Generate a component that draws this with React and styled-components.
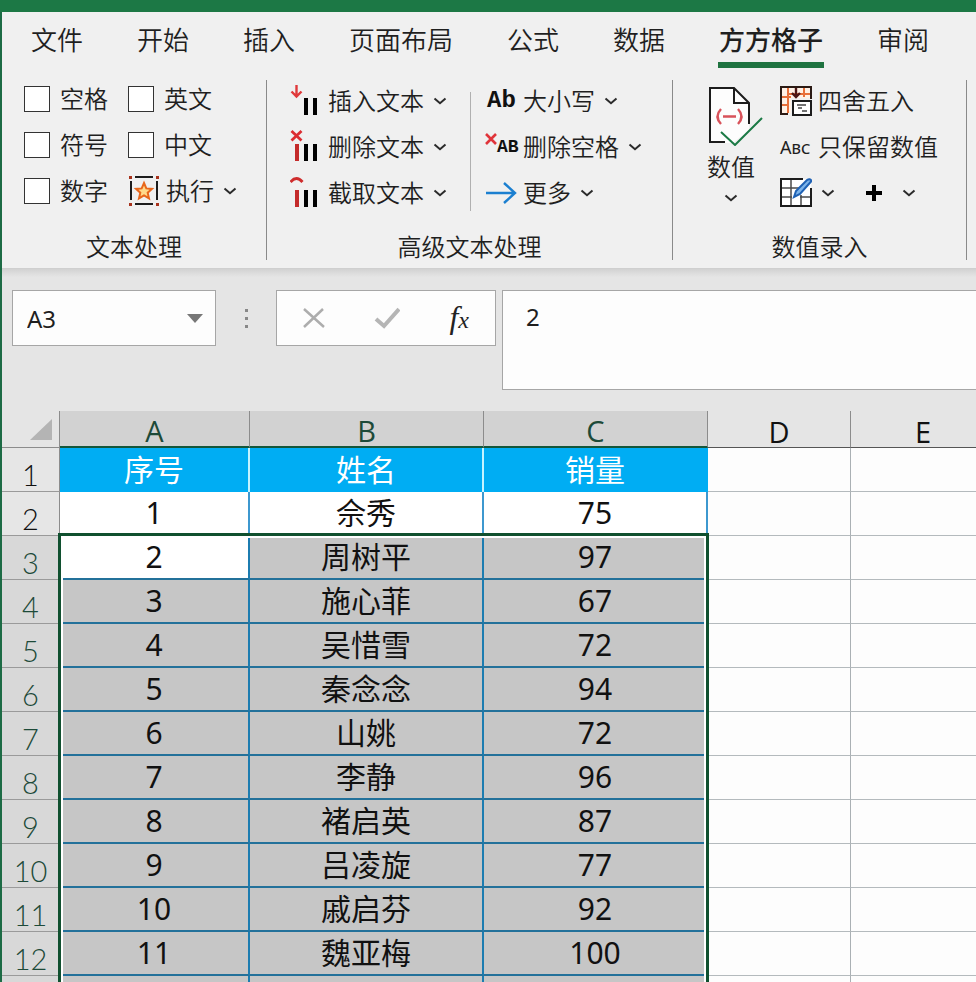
import React from 'react';
import styled, { createGlobalStyle } from 'styled-components';

const GlobalStyle = createGlobalStyle`
  * {
    box-sizing: border-box;
  }

  body {
    margin: 0;
    background: #e5e5e5;
    color: #1f1f1f;
    font-family: 'Noto Sans', 'Noto Sans CJK SC', sans-serif;
  }

  button,
  input,
  textarea {
    font: inherit;
    color: inherit;
  }
`;

const tabs = ['文件', '开始', '插入', '页面布局', '公式', '数据', '方方格子', '审阅'];

const columns = [
  { name: 'A', selected: true },
  { name: 'B', selected: true },
  { name: 'C', selected: true },
  { name: 'D' },
  { name: 'E' }
];

const people = [
  [1, '佘秀', 75],
  [2, '周树平', 97],
  [3, '施心菲', 67],
  [4, '吴惜雪', 72],
  [5, '秦念念', 94],
  [6, '山姚', 72],
  [7, '李静', 96],
  [8, '褚启英', 87],
  [9, '吕凌旋', 77],
  [10, '戚启芬', 92],
  [11, '魏亚梅', 100]
];

const Caret = () => (
  <CaretSvg width="14" height="8" viewBox="0 0 14 8" aria-hidden="true">
    <path d="M1.5 1.5 L7 6.2 L12.5 1.5" fill="none" stroke="#2b2b2b" strokeWidth="2" />
  </CaretSvg>
);

const StarIcon = () => (
  <svg width="32" height="32" viewBox="0 0 32 32" aria-hidden="true">
    <path d="M7 2 H25 M7 29 H25 M3 6 V25 M29 6 V25" stroke="#1c1c1c" strokeWidth="2" />
    <path d="M1 1h3v3H1z M28 1h3v3h-3z M1 28h3v3H1z M28 28h3v3h-3z" fill="#a8321c" />
    <path
      d="M16 8 L18.3 13.4 L24 13.9 L19.7 17.7 L21 23.4 L16 20.4 L11 23.4 L12.3 17.7 L8 13.9 L13.7 13.4 Z"
      fill="#ffd98a"
      stroke="#e8661b"
      strokeWidth="2"
    />
  </svg>
);

const BarsIcon = ({ kind }) => (
  <svg width="32" height="36" viewBox="0 0 32 36" aria-hidden="true">
    {kind === 'insert' && (
      <path d="M6.5 2 V13 M1.5 8.5 L6.5 13.5 L11.5 8.5" fill="none" stroke="#e0393b" strokeWidth="2.4" />
    )}
    {kind === 'delete' && (
      <path d="M1.5 2 L11.5 11.5 M11.5 2 L1.5 11.5" stroke="#dc2c31" strokeWidth="2.8" />
    )}
    {kind === 'cut' && (
      <path d="M0.5 7 Q6.5 0 12.5 7" fill="none" stroke="#cf2d2d" strokeWidth="2.8" />
    )}
    {kind !== 'insert' && <path d="M5 15h4v17H5z" fill="#c42b2b" />}
    <path d="M14 15h4v17h-4z M23 15h4v17h-4z" fill="#000" />
  </svg>
);

const ArrowIcon = () => (
  <svg width="32" height="24" viewBox="0 0 32 24" aria-hidden="true">
    <path d="M1 12 H30 M19 2 L30 12 L19 22" fill="none" stroke="#1b7fd0" strokeWidth="2.4" />
  </svg>
);

const RedCross = () => (
  <svg width="12" height="12" viewBox="0 0 12 12" aria-hidden="true">
    <path d="M1 1 L11 11 M11 1 L1 11" stroke="#e0343a" strokeWidth="2.6" />
  </svg>
);

const DocumentIcon = () => (
  <svg width="56" height="60" viewBox="0 0 56 60" aria-hidden="true">
    <path d="M3 2 H27 L42 17 V44 L26 57 H3 Z" fill="#fdfdfd" />
    <path d="M18 56 H3 V2 H27 L42 17 V38 M27 2 V17 H42" fill="none" stroke="#1c1c1c" strokeWidth="2" />
    <path
      d="M14 23 Q7 30.5 14 38 M31 23 Q38 30.5 31 38 M16 30.5 H29"
      fill="none"
      stroke="#d8525a"
      strokeWidth="2.4"
    />
    <path d="M14 46 L28 59 L55 32" fill="none" stroke="#1b7a45" strokeWidth="2" />
  </svg>
);

const RoundIcon = () => (
  <svg width="32" height="32" viewBox="0 0 32 32" aria-hidden="true">
    <path d="M1 2h30v11H11v15H1z" fill="#fff1e6" />
    <path d="M8 3 V28 M24 3 V12 M2 12 H11 M2 20 H8 M9 9 H23 M24 9 H30" stroke="#e8703a" strokeWidth="2" />
    <path d="M8 29 H1 V2 H31 V14" fill="none" stroke="#2b1a14" strokeWidth="2" />
    <path d="M16 3 V12 M12 8 L16 12 L20 8" fill="none" stroke="#4d1616" strokeWidth="2.4" />
    <path d="M13 16h18v14H13z" fill="#fff" stroke="#1c1c1c" strokeWidth="2" />
    <path d="M17 20 H26 M18 23 H22 M22 26 H27" stroke="#444" strokeWidth="1.5" />
  </svg>
);

const TableEditIcon = () => (
  <svg width="32" height="32" viewBox="0 0 32 32" aria-hidden="true">
    <path d="M1 2h30v27H1z" fill="#fff" />
    <path d="M11 2 V29 M21 18 V29 M1 11 H21 M1 20 H12 M20 20 H31" stroke="#4a4a4a" strokeWidth="1.5" />
    <path d="M23 2 H1 V29 H31 V11" fill="none" stroke="#1c1c1c" strokeWidth="2" />
    <path d="M14 20 L16 14 L27 3 Q30 1 31.5 4 L20 17 Z" fill="#7db4ea" stroke="#1f62b5" strokeWidth="2" />
  </svg>
);

const CommandButton = ({ icon, children }) => (
  <Command type="button">
    <IconSlot>{icon}</IconSlot>
    <span>{children}</span>
    <Caret />
  </Command>
);

const CheckOption = ({ children }) => (
  <CheckLabel>
    <CheckInput type="checkbox" />
    {children}
  </CheckLabel>
);

const Ribbon = () => (
  <RibbonPanel>
    <TabList>
      {tabs.map((tab) => (
        <Tab key={tab} type="button" $active={tab === '方方格子'}>
          {tab}
        </Tab>
      ))}
    </TabList>
    <Groups>
      <Group>
        <CheckGrid>
          <CheckOption>空格</CheckOption>
          <CheckOption>英文</CheckOption>
          <CheckOption>符号</CheckOption>
          <CheckOption>中文</CheckOption>
          <CheckOption>数字</CheckOption>
          <CommandButton icon={<StarIcon />}>执行</CommandButton>
        </CheckGrid>
        <GroupTitle>文本处理</GroupTitle>
      </Group>
      <Divider />
      <Group $offset>
        <GroupBody>
          <Stack>
            <CommandButton icon={<BarsIcon kind="insert" />}>插入文本</CommandButton>
            <CommandButton icon={<BarsIcon kind="delete" />}>删除文本</CommandButton>
            <CommandButton icon={<BarsIcon kind="cut" />}>截取文本</CommandButton>
          </Stack>
          <InnerDivider />
          <Stack>
            <CommandButton icon={<CaseGlyph>Ab</CaseGlyph>}>大小写</CommandButton>
            <CommandButton
              icon={
                <CrossedGlyph>
                  <RedCross />
                  <b>AB</b>
                </CrossedGlyph>
              }
            >
              删除空格
            </CommandButton>
            <CommandButton icon={<ArrowIcon />}>更多</CommandButton>
          </Stack>
        </GroupBody>
        <GroupTitle>高级文本处理</GroupTitle>
      </Group>
      <Divider />
      <Group $offset>
        <GroupBody $wide>
          <BigCommand type="button">
            <DocumentIcon />
            <span>数值</span>
            <BigCaret>
              <Caret />
            </BigCaret>
          </BigCommand>
          <Stack>
            <Command type="button">
              <IconSlot>
                <RoundIcon />
              </IconSlot>
              <span>四舍五入</span>
            </Command>
            <Command type="button">
              <IconSlot>
                <SmallCaps>Abc</SmallCaps>
              </IconSlot>
              <span>只保留数值</span>
            </Command>
            <IconRow>
              <Command type="button" aria-label="表格编辑">
                <TableEditIcon />
                <Caret />
              </Command>
              <Command type="button" aria-label="加" $spread>
                <svg width="18" height="18" viewBox="0 0 18 18" aria-hidden="true">
                  <path d="M9 1 V17 M1 9 H17" stroke="#000" strokeWidth="4" />
                </svg>
                <Caret />
              </Command>
            </IconRow>
          </Stack>
        </GroupBody>
        <GroupTitle>数值录入</GroupTitle>
      </Group>
      <Divider />
    </Groups>
  </RibbonPanel>
);

const FormulaBar = () => (
  <FormulaRow>
    <NameBox>
      <NameInput aria-label="名称框" defaultValue="A3" />
      <PlainButton type="button" aria-label="名称列表">
        <svg width="16" height="9" viewBox="0 0 16 9" aria-hidden="true">
          <path d="M0 0 H16 L8 9 Z" fill="#777" />
        </svg>
      </PlainButton>
    </NameBox>
    <Dots width="4" height="20" viewBox="0 0 4 20" aria-hidden="true">
      <path d="M1 1h3v3H1z M1 9h3v3H1z M1 17h3v3H1z" fill="#888" />
    </Dots>
    <FunctionBox>
      <PlainButton type="button" aria-label="取消">
        <svg width="22" height="20" viewBox="0 0 22 20" aria-hidden="true">
          <path d="M1 1 L21 19 M20 1 L1 19" stroke="#adadad" strokeWidth="2.5" />
        </svg>
      </PlainButton>
      <PlainButton type="button" aria-label="输入">
        <svg width="26" height="22" viewBox="0 0 26 22" aria-hidden="true">
          <path d="M2 12 L10 19 L25 2" fill="none" stroke="#b5b5b5" strokeWidth="4" />
        </svg>
      </PlainButton>
      <FxButton type="button">
        f<small>x</small>
      </FxButton>
    </FunctionBox>
    <FormulaInput aria-label="编辑栏" defaultValue="2" />
  </FormulaRow>
);

const Sheet = () => (
  <SheetArea>
    <Table>
      <colgroup>
        <Col $width={58} />
        <Col $width={190} />
        <Col $width={234} />
        <Col $width={224} />
        <Col $width={143} />
        <Col $width={145} />
        <col />
      </colgroup>
      <thead>
        <tr>
          <Corner>
            <svg width="22" height="21" viewBox="0 0 22 21" aria-hidden="true">
              <path d="M22 0 V21 H0 Z" fill="#b4b4b4" />
            </svg>
          </Corner>
          {columns.map((column) => (
            <ColumnHead key={column.name} scope="col" $selected={column.selected}>
              {column.name}
            </ColumnHead>
          ))}
          <ColumnHead as="td" />
        </tr>
      </thead>
      <tbody>
        <tr>
          <RowHead scope="row">1</RowHead>
          <TitleCell>序号</TitleCell>
          <TitleCell>姓名</TitleCell>
          <TitleCell $last>销量</TitleCell>
          <EmptyCell />
          <EmptyCell />
          <EmptyCell />
        </tr>
        {people.map((person, i) => (
          <tr key={person[0]}>
            <RowHead scope="row" $selected={i > 0}>
              {i + 2}
            </RowHead>
            {person.map((value, j) => (
              <DataCell key={j} $selected={i > 0} $current={i === 1 && j === 0}>
                {value}
              </DataCell>
            ))}
            <EmptyCell />
            <EmptyCell />
            <EmptyCell />
          </tr>
        ))}
        <tr>
          <RowHead as="td" $selected />
          <DataCell $selected />
          <DataCell $selected />
          <DataCell $selected />
          <EmptyCell />
          <EmptyCell />
          <EmptyCell />
        </tr>
      </tbody>
    </Table>
    <Selection />
  </SheetArea>
);

const App = () => (
  <Window>
    <GlobalStyle />
    <TitleBar />
    <Workbook>
      <Ribbon />
      <FormulaBar />
      <Sheet />
    </Workbook>
  </Window>
);

const Window = styled.div`
  display: flex;
  flex-direction: column;
  height: 100vh;
  overflow: hidden;
`;

const TitleBar = styled.header`
  flex: none;
  height: 12px;
  background: #1c7845;
`;

const Workbook = styled.main`
  flex: 1;
  display: flex;
  flex-direction: column;
  min-height: 0;
  border-left: 2px solid #1d6b45;
`;

const RibbonPanel = styled.section`
  padding-bottom: 8px;
  background: #f0f0f0;
  border-bottom: 1px solid #cfcfcf;
`;

const TabList = styled.nav`
  display: flex;
  gap: 52px;
  height: 64px;
  padding: 10px 28px 8px;
`;

const Tab = styled.button`
  padding: 0 1px 4px;
  border: 0;
  border-bottom: 6px solid ${(props) => (props.$active ? '#1f7340' : 'transparent')};
  background: none;
  font-size: 26px;
  font-weight: ${(props) => (props.$active ? 500 : 350)};
  line-height: 36px;
  white-space: nowrap;
`;

const Groups = styled.div`
  display: flex;
  font-size: 24px;
  font-weight: 350;
  line-height: 26px;
`;

const Group = styled.div`
  display: flex;
  flex-direction: column;
  justify-content: space-between;
  padding-top: ${(props) => (props.$offset ? '2px' : '0')};
`;

const GroupBody = styled.div`
  display: flex;
  padding: ${(props) => (props.$wide ? '0 28px 0 34px' : '0 30px 0 23px')};
  gap: ${(props) => (props.$wide ? '17px' : '0')};
`;

const GroupTitle = styled.div`
  margin-top: 18px;
  text-align: center;
`;

const Divider = styled.div`
  width: 1px;
  margin-top: 4px;
  background: #8a8a8a;
`;

const InnerDivider = styled.div`
  width: 1px;
  margin: 14px 14px 5px 23px;
  background: #b0b0b0;
`;

const CheckGrid = styled.div`
  display: grid;
  grid-template-columns: 84px auto;
  grid-auto-rows: 46px;
  column-gap: 20px;
  padding: 0 29px 0 22px;
`;

const CheckLabel = styled.label`
  display: flex;
  align-items: center;
  gap: 10px;
  white-space: nowrap;
`;

const CheckInput = styled.input`
  appearance: none;
  width: 26px;
  height: 26px;
  margin: 0;
  border: 1px solid #333;
  background: #fff;

  &:checked {
    background: #1f7340;
  }
`;

const Stack = styled.div`
  display: grid;
  grid-auto-rows: 46px;
`;

const IconRow = styled.div`
  display: flex;
  gap: 30px;
`;

const CaretSvg = styled.svg`
  flex: none;
  margin-left: 9px;
`;

const Command = styled.button`
  display: flex;
  align-items: center;
  padding: 0;
  border: 0;
  background: none;
  white-space: nowrap;

  ${CaretSvg} {
    margin-left: ${(props) => (props.$spread ? '19px' : '9px')};
  }
`;

const IconSlot = styled.span`
  display: flex;
  align-items: center;
  width: 32px;
  margin-right: 6px;
`;

const CaseGlyph = styled.span`
  padding-left: 2px;
  color: #111;
  font-family: 'Liberation Mono', monospace;
  font-size: 24px;
  font-weight: 700;
`;

const CrossedGlyph = styled.span`
  display: flex;
  align-items: flex-start;
  color: #111;
  font-family: 'Liberation Mono', monospace;
  font-size: 18px;
  line-height: 28px;

  svg {
    flex: none;
  }

  b {
    font-weight: 700;
  }
`;

const SmallCaps = styled.span`
  font-size: 18px;
  font-weight: 400;
  font-variant: small-caps;
`;

const BigCommand = styled.button`
  display: flex;
  flex-direction: column;
  align-items: flex-start;
  align-self: flex-start;
  gap: 8px;
  width: 56px;
  padding: 8px 0 0;
  border: 0;
  background: none;
`;

const BigCaret = styled.span`
  display: flex;
  padding: 6px 0 0 8px;
`;

const FormulaRow = styled.section`
  display: flex;
  align-items: flex-start;
  padding: 21px 0 21px 10px;
  background: linear-gradient(#d2d2d2, #e5e5e5 8px);
  font-size: 24px;
`;

const NameBox = styled.div`
  display: flex;
  align-items: center;
  width: 204px;
  height: 56px;
  padding: 0 12px 0 14px;
  border: 1px solid #a6a6a6;
  background: #fdfdfd;
`;

const NameInput = styled.input`
  flex: 1;
  min-width: 0;
  padding: 0;
  border: 0;
  background: none;
  outline: none;
`;

const PlainButton = styled.button`
  display: flex;
  padding: 0;
  border: 0;
  background: none;
`;

const Dots = styled.svg`
  margin: 18px 28px 0;
`;

const FunctionBox = styled.div`
  display: flex;
  align-items: center;
  justify-content: space-between;
  width: 220px;
  height: 56px;
  padding: 0 26px;
  border: 1px solid #a6a6a6;
  background: #fdfdfd;
`;

const FxButton = styled(PlainButton)`
  align-items: baseline;
  color: #222;
  font-family: 'Liberation Serif', serif;
  font-size: 32px;
  font-style: italic;
  line-height: 32px;

  small {
    font-size: 24px;
  }
`;

const FormulaInput = styled.textarea`
  flex: 1;
  min-width: 0;
  height: 100px;
  margin-left: 6px;
  padding: 10px 23px;
  border: 1px solid #a6a6a6;
  border-right: 0;
  background: #fdfdfd;
  line-height: 32px;
  outline: none;
  resize: none;
`;

const SheetArea = styled.section`
  position: relative;
  flex: 1;
  min-height: 0;
  overflow: hidden;
`;

const Table = styled.table`
  width: 100%;
  min-width: 1040px;
  table-layout: fixed;
  border-collapse: separate;
  border-spacing: 0;
  text-align: center;
`;

const Col = styled.col`
  width: ${(props) => props.$width}px;
`;

const Corner = styled.td`
  height: 37px;
  padding: 8px 7px 0 0;
  border-right: 1px solid #8c8c8c;
  border-bottom: 1px solid #8c8c8c;
  background: #e5e5e5;
  vertical-align: top;

  svg {
    display: block;
    margin-left: auto;
  }
`;

const ColumnHead = styled.th`
  height: 37px;
  padding: 5px 0 0;
  border-right: 1px solid #8c8c8c;
  border-bottom: ${(props) => (props.$selected ? '2px solid #14563a' : '1px solid #555')};
  background: ${(props) => (props.$selected ? '#d2d2d2' : '#e5e5e5')};
  color: ${(props) => (props.$selected ? '#1d4a38' : '#111')};
  font-family: 'Open Sans', sans-serif;
  font-size: 29px;
  font-weight: 400;
  line-height: 30px;
`;

const RowHead = styled.th`
  height: 44px;
  padding: 10px 0 0;
  border-right: 1px solid #8c8c8c;
  border-bottom: 1px solid #9a9a9a;
  background: ${(props) => (props.$selected ? '#d8d8d8' : '#e6e6e6')};
  color: ${(props) => (props.$selected ? '#1d4a38' : '#111')};
  font-family: Lato, sans-serif;
  font-size: 29px;
  font-weight: 300;
  line-height: 32px;
`;

const Cell = styled.td`
  height: 44px;
  padding: 0;
  font-size: 30px;
  line-height: 40px;
`;

const TitleCell = styled(Cell)`
  border-right: 2px solid ${(props) => (props.$last ? '#00adf3' : '#c4f3ff')};
  background: #00adf3;
  color: #fff;
`;

const DataCell = styled(Cell)`
  border-right: 2px solid ${(props) => (props.$selected ? '#1c7cb0' : '#3d98cf')};
  border-bottom: 2px solid ${(props) => (props.$selected ? '#23719a' : '#fff')};
  background: ${(props) => (props.$selected && !props.$current ? '#c6c6c6' : '#fff')};
  color: #111;
`;

const EmptyCell = styled(Cell)`
  border-right: 1px solid #aab0b4;
  border-bottom: 1px solid #b4babd;
  background: #fdfdfd;
`;

/* outline round the selected range, open at the bottom of the window */
const Selection = styled.div`
  position: absolute;
  top: 122px;
  bottom: -8px;
  left: 56px;
  width: 651px;
  border: 3px solid #10502f;
  box-shadow: inset 0 0 0 2px #fff;
  pointer-events: none;
`;

export default App;
